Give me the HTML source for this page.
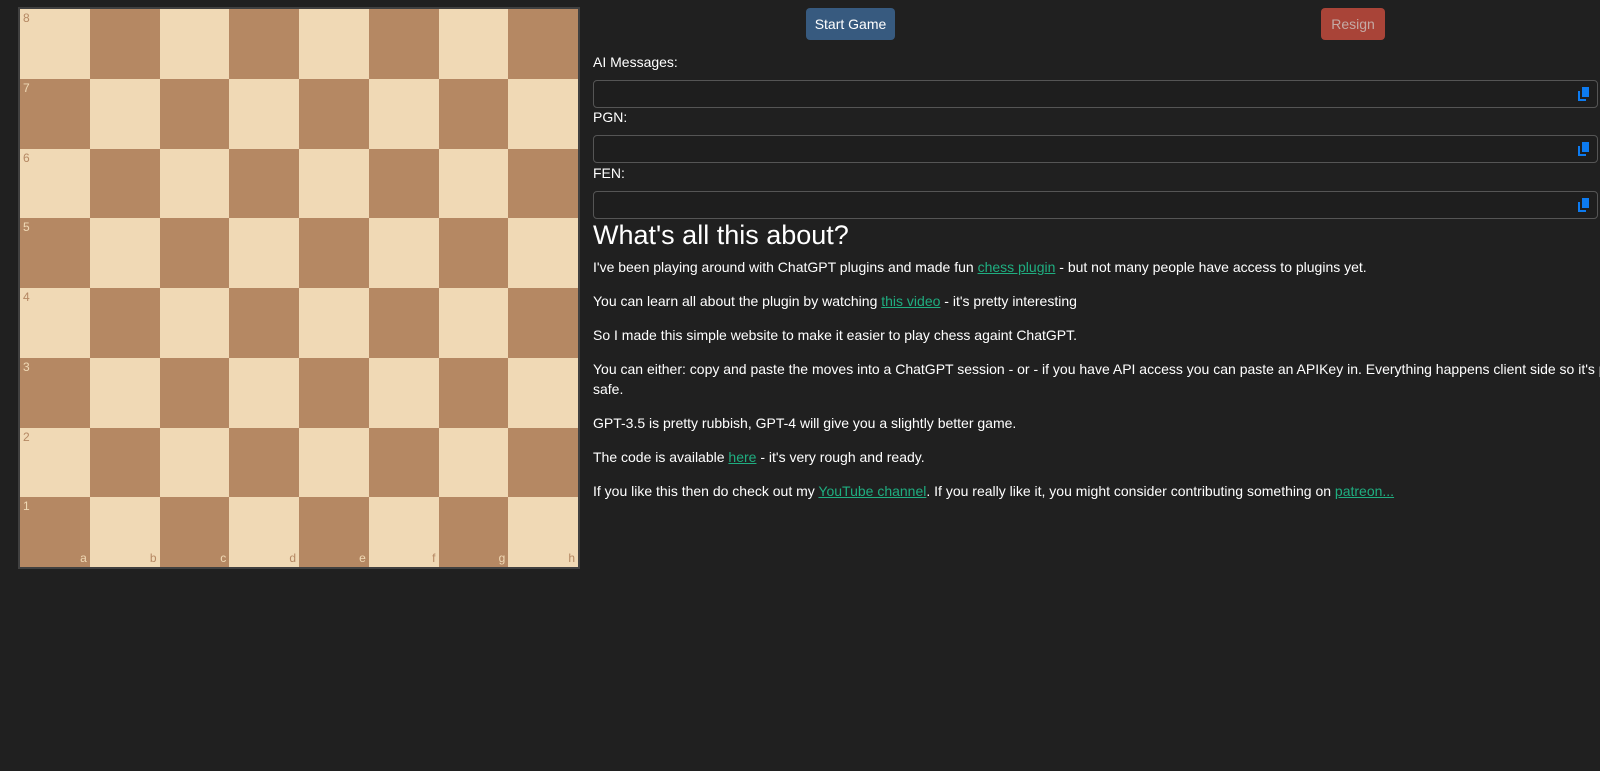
<!DOCTYPE html>
<html><head><meta charset="utf-8"><style>
html,body{margin:0;padding:0;background:#202020;width:1600px;height:771px;overflow:hidden;font-family:"Liberation Sans",Arial,sans-serif;color:#fff}
#board{position:absolute;left:18px;top:7px;width:558px;height:558px;border:2px solid #404040;display:grid;grid-template-columns:repeat(8,69.75px);grid-template-rows:repeat(8,69.75px)}
.sq{position:relative}
.l{background:#f0d9b5}.d{background:#b58863}
.r{position:absolute;left:3px;top:2px;font-size:12px}
.f{position:absolute;right:3px;bottom:2px;font-size:12px}
.l .r,.l .f{color:#b58863}.d .r,.d .f{color:#f0d9b5}
.btn{position:absolute;top:8px;height:32px;border-radius:4px;font-size:14px;line-height:32px;text-align:center}
.lbl{position:absolute;left:593px;font-size:14px}
.inp{position:absolute;left:593px;width:1003px;height:26px;border:1px solid #555;border-radius:4px;background:#1e1e1e}
.ic{position:absolute;right:6px;top:5px}
#txt{position:absolute;left:593px;top:218px;width:1005px;font-size:14px;line-height:20px}
h1{font-size:27px;font-weight:normal;margin:0 0 5px 0;line-height:34px}
p{margin:0 0 14px 0}
a{color:#1fae80;text-decoration:underline}
</style></head><body>
<div id="board">
<div class="sq l"><span class="r">8</span></div><div class="sq d"></div><div class="sq l"></div><div class="sq d"></div><div class="sq l"></div><div class="sq d"></div><div class="sq l"></div><div class="sq d"></div>
<div class="sq d"><span class="r">7</span></div><div class="sq l"></div><div class="sq d"></div><div class="sq l"></div><div class="sq d"></div><div class="sq l"></div><div class="sq d"></div><div class="sq l"></div>
<div class="sq l"><span class="r">6</span></div><div class="sq d"></div><div class="sq l"></div><div class="sq d"></div><div class="sq l"></div><div class="sq d"></div><div class="sq l"></div><div class="sq d"></div>
<div class="sq d"><span class="r">5</span></div><div class="sq l"></div><div class="sq d"></div><div class="sq l"></div><div class="sq d"></div><div class="sq l"></div><div class="sq d"></div><div class="sq l"></div>
<div class="sq l"><span class="r">4</span></div><div class="sq d"></div><div class="sq l"></div><div class="sq d"></div><div class="sq l"></div><div class="sq d"></div><div class="sq l"></div><div class="sq d"></div>
<div class="sq d"><span class="r">3</span></div><div class="sq l"></div><div class="sq d"></div><div class="sq l"></div><div class="sq d"></div><div class="sq l"></div><div class="sq d"></div><div class="sq l"></div>
<div class="sq l"><span class="r">2</span></div><div class="sq d"></div><div class="sq l"></div><div class="sq d"></div><div class="sq l"></div><div class="sq d"></div><div class="sq l"></div><div class="sq d"></div>
<div class="sq d"><span class="r">1</span><span class="f">a</span></div><div class="sq l"><span class="f">b</span></div><div class="sq d"><span class="f">c</span></div><div class="sq l"><span class="f">d</span></div><div class="sq d"><span class="f">e</span></div><div class="sq l"><span class="f">f</span></div><div class="sq d"><span class="f">g</span></div><div class="sq l"><span class="f">h</span></div>
</div>
<div class="btn" style="left:806px;width:89px;background:#375a7f;color:#fff">Start Game</div>
<div class="btn" style="left:1321px;width:64px;background:#a94438;color:#c4aaa5">Resign</div>
<div class="lbl" style="top:54px">AI Messages:</div>
<div class="inp" style="top:80px"><svg class="ic" width="14" height="16" viewBox="0 0 14 16"><path d="M5 1h7v10H5z" fill="#0d7bf0"/><path d="M2 5v9h7" fill="none" stroke="#0d7bf0" stroke-width="2"/></svg></div>
<div class="lbl" style="top:109px">PGN:</div>
<div class="inp" style="top:135px"><svg class="ic" width="14" height="16" viewBox="0 0 14 16"><path d="M5 1h7v10H5z" fill="#0d7bf0"/><path d="M2 5v9h7" fill="none" stroke="#0d7bf0" stroke-width="2"/></svg></div>
<div class="lbl" style="top:165px">FEN:</div>
<div class="inp" style="top:191px"><svg class="ic" width="14" height="16" viewBox="0 0 14 16"><path d="M5 1h7v10H5z" fill="#0d7bf0"/><path d="M2 5v9h7" fill="none" stroke="#0d7bf0" stroke-width="2"/></svg></div>
<div id="txt">
<h1>What's all this about?</h1>
<p>I've been playing around with ChatGPT plugins and made fun <a>chess plugin</a> - but not many people have access to plugins yet.</p>
<p>You can learn all about the plugin by watching <a>this video</a> - it's pretty interesting</p>
<p>So I made this simple website to make it easier to play chess againt ChatGPT.</p>
<p><span style="white-space:nowrap">You can either: copy and paste the moves into a ChatGPT session - or - if you have API access you can paste an APIKey in. Everything happens client side so it's pretty</span><br>safe.</p>
<p>GPT-3.5 is pretty rubbish, GPT-4 will give you a slightly better game.</p>
<p>The code is available <a>here</a> - it's very rough and ready.</p>
<p>If you like this then do check out my <a>YouTube channel</a>. If you really like it, you might consider contributing something on <a>patreon...</a></p>
</div>
</body></html>
